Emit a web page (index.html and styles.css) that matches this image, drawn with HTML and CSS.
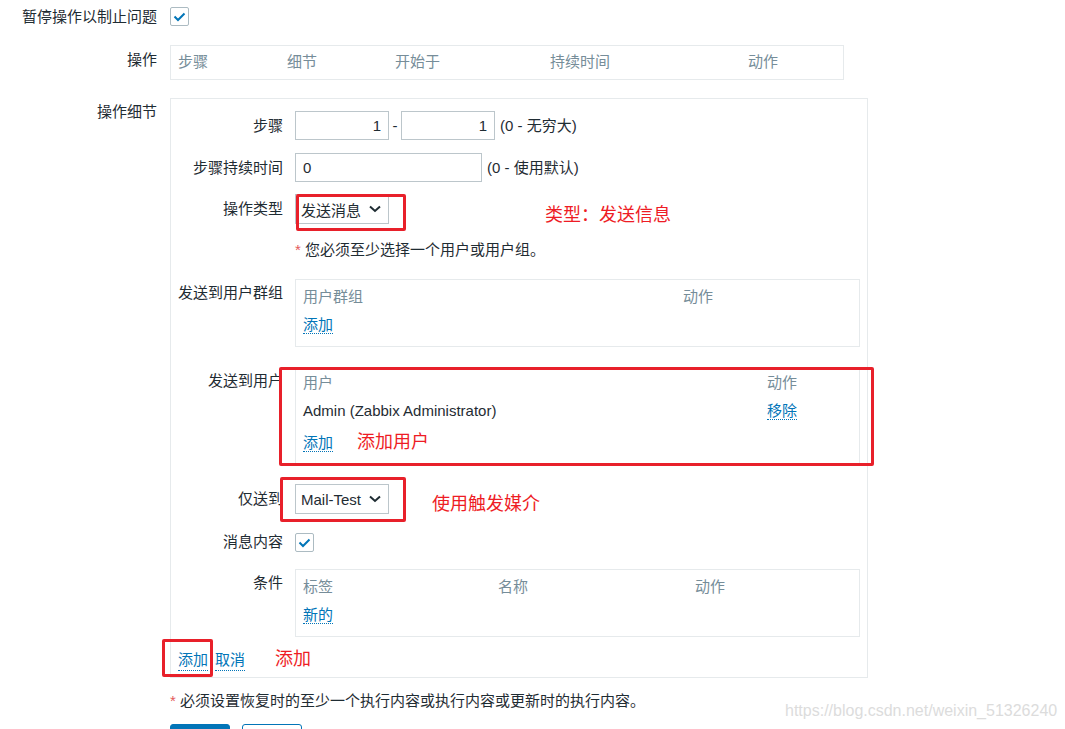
FILE: index.html
```html
<!DOCTYPE html>
<html lang="zh-cn">
<head>
    <meta charset="UTF-8">
    <title>操作</title>
    <link rel="stylesheet" href="styles.css">
</head>
<body>
    <div class="page">
        <div class="form-row">
            <div class="form-label">暂停操作以制止问题</div>
            <div class="checkbox">
                <svg width="17" height="17" viewBox="0 0 17 17"><polyline points="3.5,8.5 7,12 13.5,5.5" fill="none" stroke="#0275b8" stroke-width="2"/></svg>
            </div>
        </div>

        <div class="form-row">
            <div class="form-label label-table">操作</div>
            <div class="op-table">
                <span>步骤</span><span>细节</span><span>开始于</span><span>持续时间</span><span>动作</span>
            </div>
        </div>

        <div class="form-row last">
            <div class="form-label label-box">操作细节</div>
            <div class="detail-box">
                <div class="d-row first">
                    <div class="d-label">步骤</div>
                    <input class="input input-step" type="text" value="1">
                    <span class="dash">-</span>
                    <input class="input input-step" type="text" value="1">
                    <span class="hint">(0 - 无穷大)</span>
                </div>
                <div class="d-row gap-13">
                    <div class="d-label">步骤持续时间</div>
                    <input class="input input-wide" type="text" value="0">
                    <span class="hint">(0 - 使用默认)</span>
                </div>
                <div class="d-row gap-12">
                    <div class="d-label">操作类型</div>
                    <div class="select">
                        <span>发送消息</span>
                        <svg width="12" height="8" viewBox="0 0 12 8"><polyline points="1,1.5 6,6 11,1.5" fill="none" stroke="#1f2c33" stroke-width="2"/></svg>
                    </div>
                </div>
                <div class="d-row gap-16">
                    <div class="d-label"></div>
                    <div class="note"><span class="req">*</span> 您必须至少选择一个用户或用户组。</div>
                </div>

                <div class="d-row gap-19">
                    <div class="d-label label-table">发送到用户群组</div>
                    <div class="sub-table">
                        <div class="sub-head cols-group"><span>用户群组</span><span>动作</span></div>
                        <div class="sub-line"><a class="link">添加</a></div>
                    </div>
                </div>

                <div class="d-row gap-20">
                    <div class="d-label label-table">发送到用户</div>
                    <div class="sub-table users">
                        <div class="sub-head cols-users"><span>用户</span><span>动作</span></div>
                        <div class="sub-line cols-users"><span>Admin (Zabbix Administrator)</span><span><a class="link">移除</a></span></div>
                        <div class="sub-line last"><a class="link">添加</a></div>
                    </div>
                </div>

                <div class="d-row gap-19">
                    <div class="d-label">仅送到</div>
                    <div class="select">
                        <span>Mail-Test</span>
                        <svg width="12" height="8" viewBox="0 0 12 8"><polyline points="1,1.5 6,6 11,1.5" fill="none" stroke="#1f2c33" stroke-width="2"/></svg>
                    </div>
                </div>

                <div class="d-row gap-18 center">
                    <div class="d-label">消息内容</div>
                    <div class="checkbox">
                        <svg width="17" height="17" viewBox="0 0 17 17"><polyline points="3.5,8.5 7,12 13.5,5.5" fill="none" stroke="#0275b8" stroke-width="2"/></svg>
                    </div>
                </div>

                <div class="d-row gap-17">
                    <div class="d-label label-table">条件</div>
                    <div class="sub-table">
                        <div class="sub-head cols-cond"><span>标签</span><span>名称</span><span>动作</span></div>
                        <div class="sub-line"><a class="link">新的</a></div>
                    </div>
                </div>

                <div class="box-actions">
                    <a class="link">添加</a>
                    <a class="link">取消</a>
                </div>
            </div>
        </div>

        <div class="bottom-note"><span class="req">*</span> 必须设置恢复时的至少一个执行内容或执行内容或更新时的执行内容。</div>
        <div class="buttons">
            <button class="btn btn-primary"></button>
            <button class="btn btn-outline"></button>
        </div>

        <!-- annotations drawn over the screenshot -->
        <div class="mark mark-type"></div>
        <div class="mark-text text-type">类型：发送信息</div>
        <div class="mark mark-users"></div>
        <div class="mark-text text-users">添加用户</div>
        <div class="mark mark-media"></div>
        <div class="mark-text text-media">使用触发媒介</div>
        <div class="mark mark-add"></div>
        <div class="mark-text text-add">添加</div>

        <div class="watermark">https://blog.csdn.net/weixin_51326240</div>
    </div>
</body>
</html>
```

FILE: styles.css
```css
body {
    margin: 0;
    background-color: white;
    font-family: "Liberation Sans", "Noto Sans CJK SC", sans-serif;
    font-size: 15px;
    color: #1f2c33;
}
.page {
    position: relative;
    width: 1065px;
    height: 729px;
    padding-top: 7px;
    box-sizing: border-box;
    overflow: hidden;
}
.form-row { display: flex; margin-bottom: 18px; }
.form-row.last { margin-bottom: 0; }
.form-label {
    width: 157px;
    flex: none;
    margin-right: 13px;
    text-align: right;
    line-height: 20px;
    white-space: nowrap;
}
.form-label.label-table { padding-top: 5px; }
.form-label.label-box { padding-top: 4px; }

.checkbox {
    width: 19px;
    height: 19px;
    box-sizing: border-box;
    border: 1px solid #acbbc2;
    border-radius: 2px;
    display: flex;
    align-items: center;
    justify-content: center;
}

.op-table {
    width: 674px;
    box-sizing: border-box;
    border: 1px solid #e6eaec;
    padding: 6px 7px 7px;
    display: grid;
    grid-template-columns: 109px 108px 155px 198px 1fr;
    line-height: 20px;
    color: #768d99;
}

.detail-box {
    width: 698px;
    box-sizing: border-box;
    border: 1px solid #e6eaec;
    padding: 12px 0 6px;
}
.d-row { display: flex; align-items: flex-start; }
.d-row.center { align-items: center; }
.d-row.gap-12 { margin-top: 12px; }
.d-row.gap-13 { margin-top: 13px; }
.d-row.gap-16 { margin-top: 16px; }
.d-row.gap-17 { margin-top: 17px; }
.d-row.gap-18 { margin-top: 18px; }
.d-row.gap-19 { margin-top: 19px; }
.d-row.gap-20 { margin-top: 20px; }
.d-label {
    width: 112px;
    flex: none;
    margin-right: 12px;
    text-align: right;
    line-height: 20px;
    padding-top: 5px;
    white-space: nowrap;
}
.d-row.center .d-label { padding-top: 0; }
.d-label.label-table { padding-top: 4px; }

.input {
    height: 29px;
    box-sizing: border-box;
    border: 1px solid #bcc6cb;
    border-radius: 0;
    padding: 0 7px;
    font: inherit;
    color: #1f2c33;
    outline: none;
}
.input-step { width: 94px; text-align: right; }
.input-wide { width: 187px; }
.dash { width: 12px; text-align: center; line-height: 29px; }
.hint { margin-left: 5px; line-height: 29px; }

.select {
    width: 94px;
    height: 30px;
    box-sizing: border-box;
    border: 1px solid #bcc6cb;
    padding: 0 7px 0 5px;
    display: flex;
    align-items: center;
    justify-content: space-between;
}

.note { line-height: 20px; }
.req { color: #e45959; }

.sub-table {
    width: 565px;
    box-sizing: border-box;
    border: 1px solid #e6eaec;
    padding: 7px 7px 11px;
    line-height: 20px;
}
.sub-table.users { padding-top: 5px; }
.sub-head { color: #768d99; }
.sub-line { margin-top: 8px; height: 20px; }
.sub-line.last { margin-top: 12px; }
.cols-group { display: grid; grid-template-columns: 380px 1fr; }
.cols-users { display: grid; grid-template-columns: 464px 1fr; }
.cols-cond { display: grid; grid-template-columns: 195px 197px 1fr; }

.link {
    color: #0275b8;
    border-bottom: 1px dotted #0275b8;
    cursor: pointer;
}

.box-actions {
    margin-top: 13px;
    padding-left: 7px;
    line-height: 20px;
    display: flex;
    gap: 7px;
}

.bottom-note {
    margin-left: 170px;
    margin-top: 13px;
    line-height: 20px;
}
.buttons {
    margin-left: 170px;
    margin-top: 13px;
    display: flex;
    gap: 12px;
}
.btn {
    width: 60px;
    height: 30px;
    border-radius: 3px;
    border: 1px solid #0275b8;
}
.btn-primary { background-color: #0275b8; }
.btn-outline { background-color: white; }

.mark {
    position: absolute;
    box-sizing: border-box;
    border: 3px solid #e8202a;
    border-radius: 2px;
}
.mark-type { left: 296px; top: 194px; width: 110px; height: 37px; }
.mark-users { left: 279px; top: 367px; width: 595px; height: 99px; }
.mark-media { left: 280px; top: 477px; width: 126px; height: 45px; }
.mark-add { left: 162px; top: 639px; width: 51px; height: 38px; }

.mark-text {
    position: absolute;
    color: #ee1c25;
    font-size: 18px;
    line-height: 22px;
    white-space: nowrap;
}
.text-type { left: 545px; top: 204px; }
.text-users { left: 357px; top: 431px; }
.text-media { left: 432px; top: 493px; }
.text-add { left: 275px; top: 648px; }

.watermark {
    position: absolute;
    left: 785px;
    top: 701px;
    font-size: 16px;
    line-height: 20px;
    color: #dcdcdc;
}
```
